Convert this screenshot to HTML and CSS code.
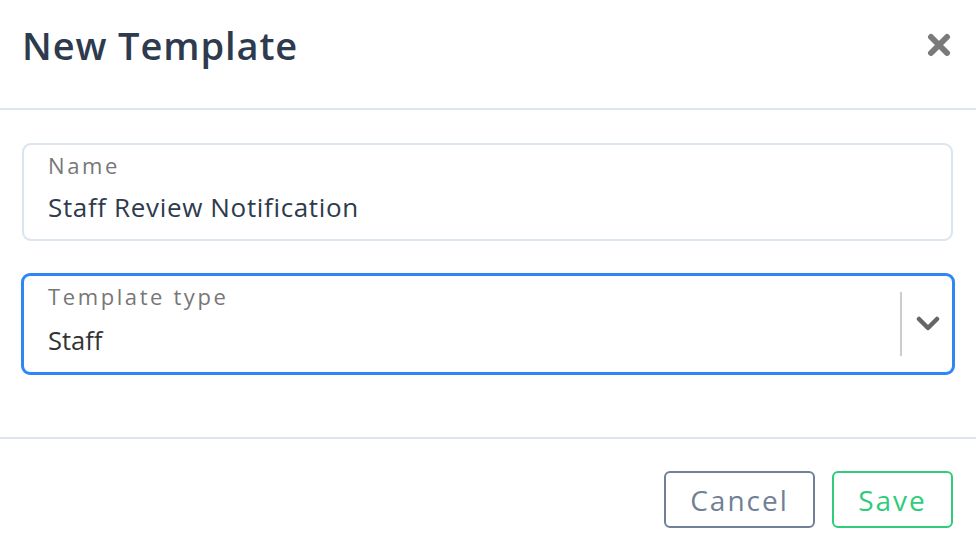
FILE: index.html
```html
<!DOCTYPE html>
<html>
<head>
<meta charset="utf-8">
<link rel="stylesheet" href="styles.css">
</head>
<body>
<div class="modal">
  <header class="modal-header">
    <h1 class="title">New Template</h1>
    <button class="close" aria-label="Close">
      <svg width="24" height="24" viewBox="0 0 24 24"><path d="M4 4 L20 20 M20 4 L4 20" stroke="#7a7a7a" stroke-width="6" stroke-linecap="round"/></svg>
    </button>
  </header>
  <section class="modal-body">
    <div class="field">
      <div class="field-label">Name</div>
      <div class="field-value">Staff Review Notification</div>
    </div>
    <div class="field select">
      <div class="select-main">
        <div class="field-label">Template type</div>
        <div class="select-value">Staff</div>
      </div>
      <div class="select-divider"></div>
      <div class="select-arrow">
        <svg width="24" height="16" viewBox="0 0 24 16"><path d="M3 3 L12 12 L21 3" fill="none" stroke="#666" stroke-width="4.5" stroke-linecap="round" stroke-linejoin="round"/></svg>
      </div>
    </div>
  </section>
  <footer class="modal-footer">
    <button class="btn btn-cancel">Cancel</button>
    <button class="btn btn-save">Save</button>
  </footer>
</div>
</body>
</html>
```
FILE: styles.css
```css
* { box-sizing: border-box; }
body {
  margin: 0;
  background: #fff;
  font-family: "Open Sans", "Noto Sans", sans-serif;
}
.modal { width: 976px; }
.modal-header {
  height: 110px;
  display: flex;
  align-items: center;
  justify-content: space-between;
  padding: 0 24px 18px 22px;
  border-bottom: 2px solid #dde5ef;
}
.title {
  margin: 0;
  font-size: 38px;
  font-weight: 600;
  color: #2e3a4d;
  letter-spacing: 0.9px;
}
.close {
  border: 0;
  background: none;
  padding: 0;
  width: 26px;
  height: 26px;
  display: flex;
  align-items: center;
  justify-content: center;
}
.modal-body {
  padding: 33px 21px 62px 21px;
  display: flex;
  flex-direction: column;
  gap: 32px;
  border-bottom: 2px solid #dde5ef;
}
.field {
  margin: 0 2px 0 1px;
  height: 98px;
  border: 2px solid #dbe4ef;
  border-radius: 9px;
  padding: 5px 24px 0 24px;
}
.field-label {
  font-size: 22px;
  color: #777;
  letter-spacing: 2.6px;
  line-height: 30px;
}
.field-value {
  margin-top: 10px;
  font-size: 26px;
  color: #2e3a4d;
  letter-spacing: 0.65px;
  line-height: 34px;
}
.select {
  margin: 0;
  height: 102px;
  border: 3px solid #2f86f6;
  border-radius: 9px;
  padding: 0 0 0 24px;
  display: flex;
  align-items: center;
}
.select-main {
  flex: 1;
  align-self: stretch;
  padding-top: 5px;
}
.select-value {
  margin-top: 12px;
  font-size: 25.5px;
  color: #333;
  line-height: 34px;
}
.select-divider {
  width: 2px;
  height: 64px;
  background: #cccccc;
}
.select-arrow {
  width: 50px;
  display: flex;
  justify-content: center;
  padding-left: 2px;
}
.modal-footer {
  display: flex;
  justify-content: flex-end;
  gap: 17px;
  padding: 32px 23px 0 0;
}
.btn {
  height: 57px;
  background: #fff;
  border: 2px solid;
  border-radius: 6px;
  font-family: "Open Sans", "Noto Sans", sans-serif;
  font-size: 28px;
  font-weight: 500;
  letter-spacing: 2px;
  padding: 0;
}
.btn-cancel {
  width: 151px;
  border-color: #718096;
  color: #718096;
}
.btn-save {
  width: 121px;
  border-color: #2fcc7a;
  color: #2fcc7a;
}
```
